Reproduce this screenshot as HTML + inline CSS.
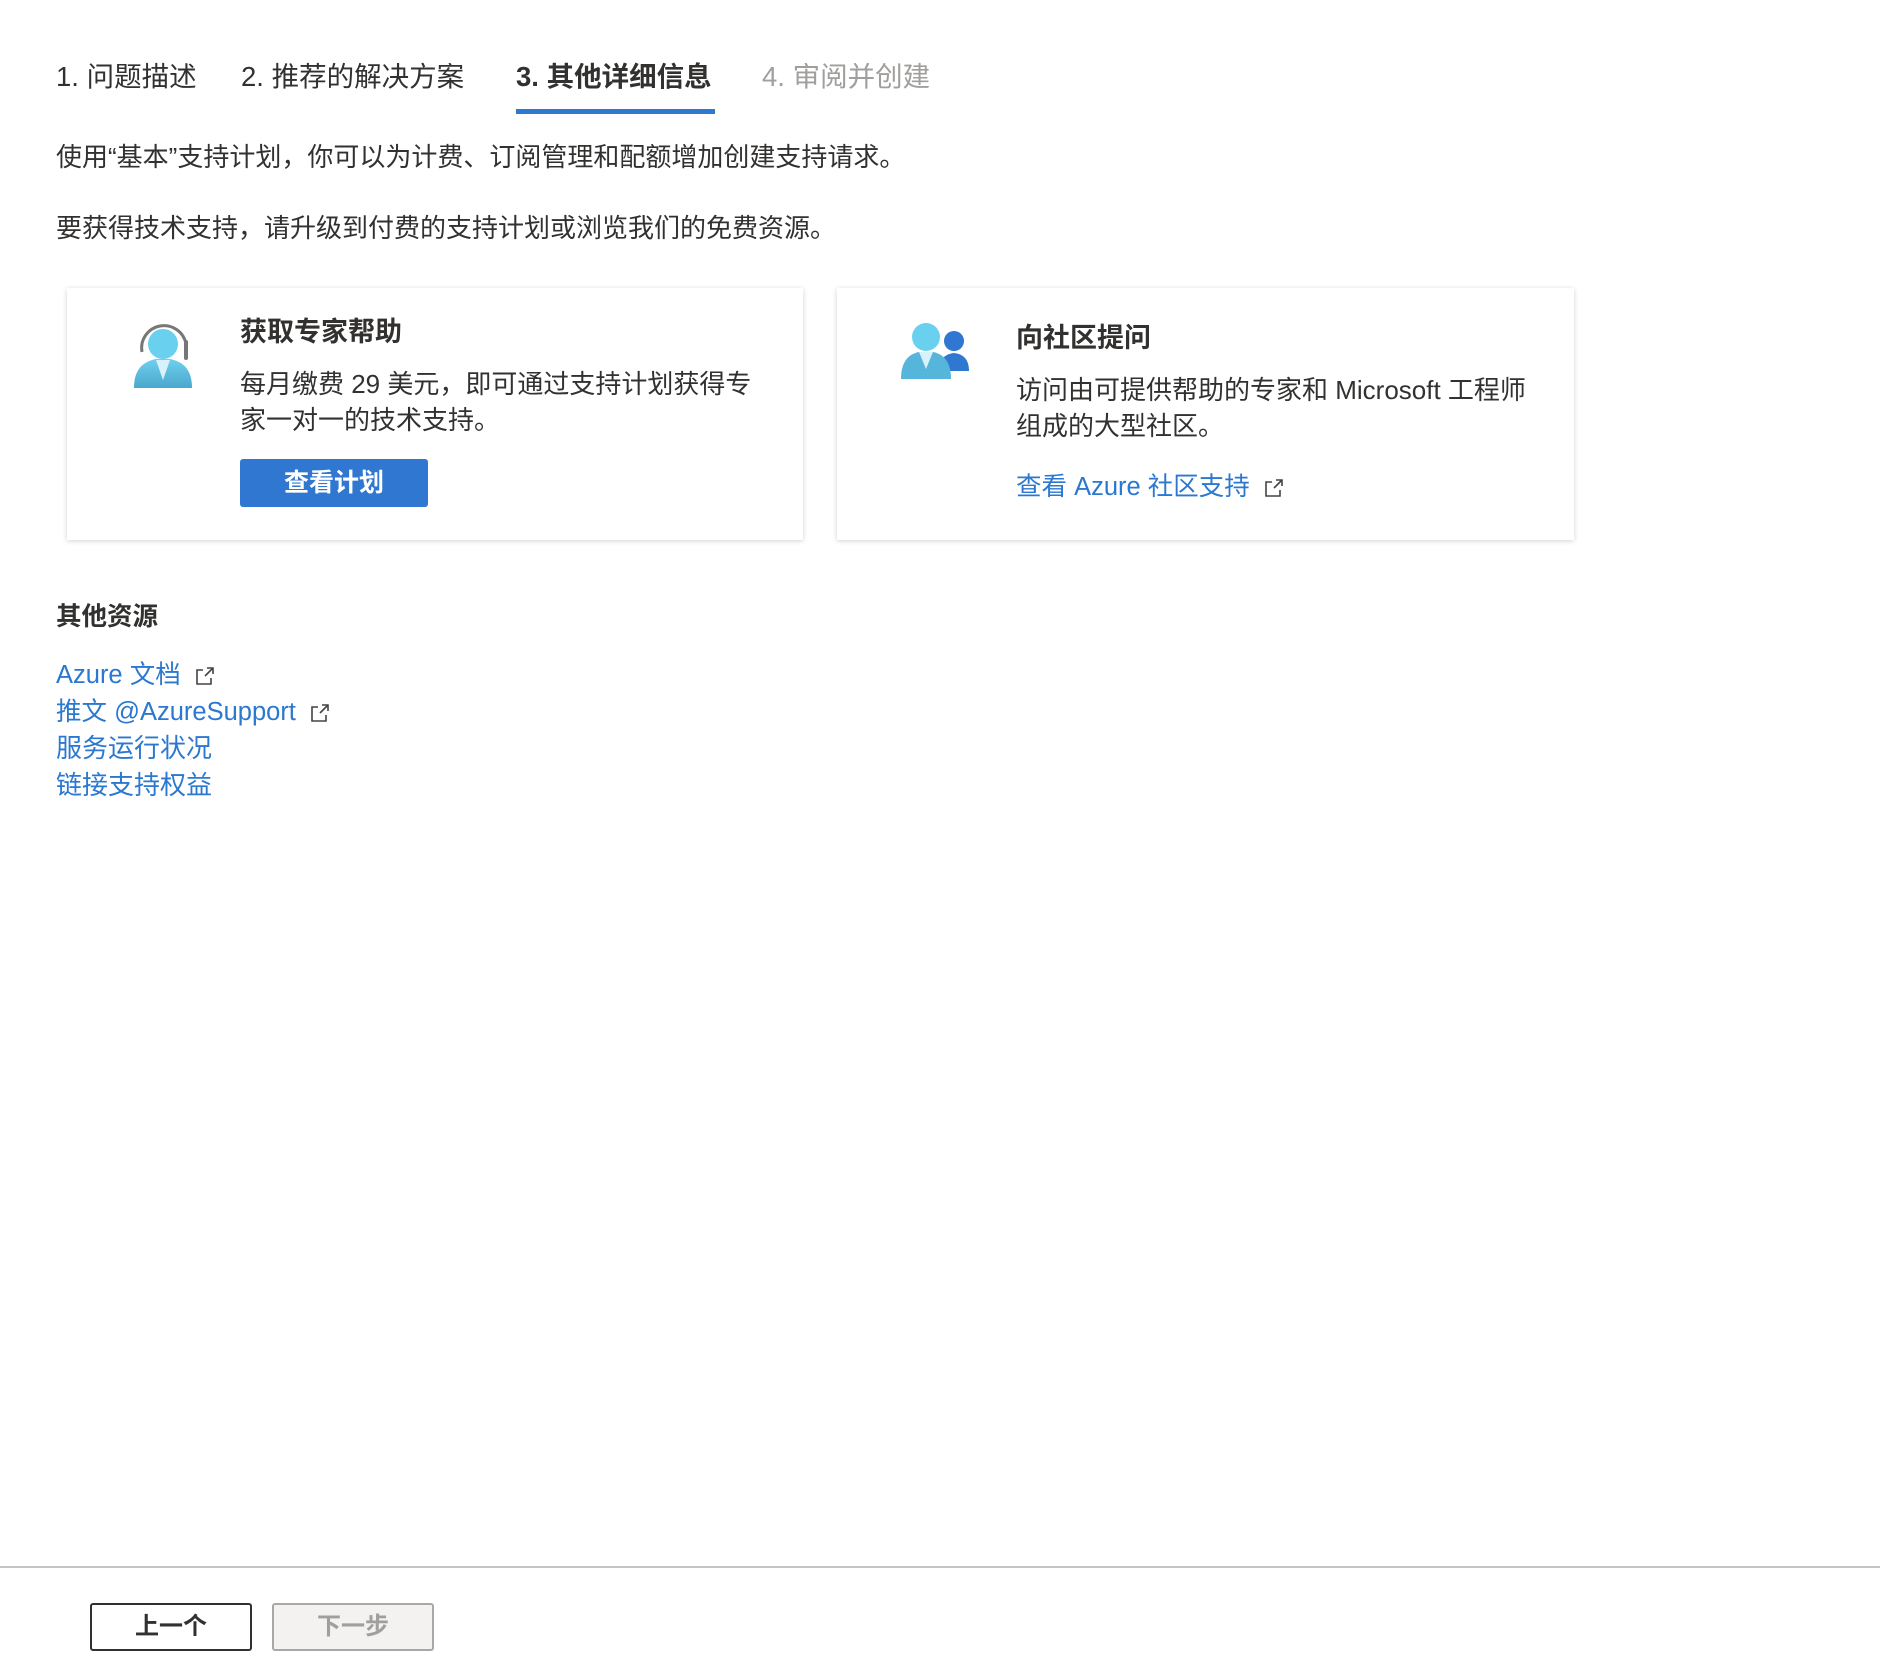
<!DOCTYPE html>
<html><head><meta charset="utf-8"><style>
*{margin:0;padding:0;box-sizing:border-box}
body{width:1880px;height:1678px;background:#fff;position:relative;overflow:hidden;font-family:"Liberation Sans","Noto Sans CJK SC",sans-serif;color:#323130}
.a{position:absolute;white-space:nowrap}
.tab{font-size:27.5px;top:57px;line-height:40px}
.p{font-size:26px;line-height:36px}
.card{position:absolute;top:288px;height:252px;background:#fff;box-shadow:0 1px 5px rgba(0,0,0,.18)}
.t{font-size:27px;font-weight:bold}
.lnk{color:#2b78d0;font-size:25.5px}
.ext{display:inline-block;vertical-align:middle;margin-left:14px}
</style></head><body>
<div class="a tab" style="left:56px">1. 问题描述</div>
<div class="a tab" style="left:241px">2. 推荐的解决方案</div>
<div class="a tab" style="left:516px;font-weight:bold">3. 其他详细信息</div>
<div class="a tab" style="left:762px;color:#a19f9d">4. 审阅并创建</div>
<div class="a" style="left:516px;top:109px;width:199px;height:5px;background:#2f77d0"></div>
<div class="a p" style="left:56px;top:139px">使用“基本”支持计划，你可以为计费、订阅管理和配额增加创建支持请求。</div>
<div class="a p" style="left:56px;top:210px">要获得技术支持，请升级到付费的支持计划或浏览我们的免费资源。</div>

<div class="card" style="left:67px;width:736px"></div>
<svg class="a" style="left:132px;top:318px" width="62" height="74" viewBox="0 0 62 74">
<defs><linearGradient id="g" x1="0" y1="0" x2="0" y2="1"><stop offset="0" stop-color="#6fd0ee"/><stop offset="1" stop-color="#4aa7cd"/></linearGradient></defs>
<path d="M10 34 A22 22 0 0 1 54 26" stroke="#777" stroke-width="3" fill="none"/>
<path d="M54 24 L54 40" stroke="#777" stroke-width="4" stroke-linecap="round"/>
<circle cx="31" cy="26" r="15" fill="#6ad0f0"/>
<path d="M2 70 C2 52 10 44 24 41 L38 41 C52 44 60 52 60 70 Z" fill="url(#g)"/>
<path d="M24 42 L38 42 L31 62 Z" fill="#d8f1fa"/>
</svg>
<div class="a t" style="left:240px;top:310px">获取专家帮助</div>
<div class="a p" style="left:240px;top:366px">每月缴费 29 美元，即可通过支持计划获得专<br>家一对一的技术支持。</div>
<div class="a" style="left:240px;top:459px;width:188px;height:48px;background:#2f77d0;border-radius:3px;color:#fff;font-weight:bold;font-size:25px;text-align:center;line-height:48px">查看计划</div>

<div class="card" style="left:837px;width:737px"></div>
<svg class="a" style="left:899px;top:321px" width="74" height="60" viewBox="0 0 74 60">
<circle cx="55" cy="20" r="10" fill="#2f77d0"/>
<path d="M40 50 C40 38 46 33 55 32 C64 33 70 38 70 50 Z" fill="#2f77d0"/>
<circle cx="27" cy="16" r="14" fill="#6ad0f0"/>
<path d="M2 58 C2 40 10 33 20 31 L34 31 C44 33 52 40 52 58 Z" fill="#55b5da"/>
<path d="M20 31 L34 31 L27 48 Z" fill="#d8f1fa"/>
</svg>
<div class="a t" style="left:1016px;top:316px">向社区提问</div>
<div class="a p" style="left:1016px;top:372px">访问由可提供帮助的专家和 Microsoft 工程师<br>组成的大型社区。</div>
<div class="a lnk" style="left:1016px;top:466px">查看 Azure 社区支持<svg class="ext" width="20" height="20" viewBox="0 0 20 20" fill="none" stroke="#444" stroke-width="1.6"><path d="M8 4H2v14h14v-6"/><path d="M10 10L18 2M12 2h6v6"/></svg></div>

<div class="a t" style="left:56px;top:596px;font-size:25.5px">其他资源</div>
<div class="a lnk" style="left:56px;top:654px">Azure 文档<svg class="ext" width="20" height="20" viewBox="0 0 20 20" fill="none" stroke="#444" stroke-width="1.6"><path d="M8 4H2v14h14v-6"/><path d="M10 10L18 2M12 2h6v6"/></svg></div>
<div class="a lnk" style="left:56px;top:691px">推文 @AzureSupport<svg class="ext" width="20" height="20" viewBox="0 0 20 20" fill="none" stroke="#444" stroke-width="1.6"><path d="M8 4H2v14h14v-6"/><path d="M10 10L18 2M12 2h6v6"/></svg></div>
<div class="a lnk" style="left:56px;top:728px;font-size:26px">服务运行状况</div>
<div class="a lnk" style="left:56px;top:765px;font-size:26px">链接支持权益</div>

<div class="a" style="left:0;top:1566px;width:1880px;height:2px;background:#c4c4c4"></div>
<div class="a" style="left:90px;top:1603px;width:162px;height:48px;border:2px solid #323130;border-radius:3px;font-size:24px;font-weight:bold;text-align:center;line-height:44px">上一个</div>
<div class="a" style="left:272px;top:1603px;width:162px;height:48px;border:2px solid #a8a8a8;border-radius:3px;background:#f3f2f1;color:#a19f9d;font-size:24px;font-weight:bold;text-align:center;line-height:44px">下一步</div>
</body></html>
